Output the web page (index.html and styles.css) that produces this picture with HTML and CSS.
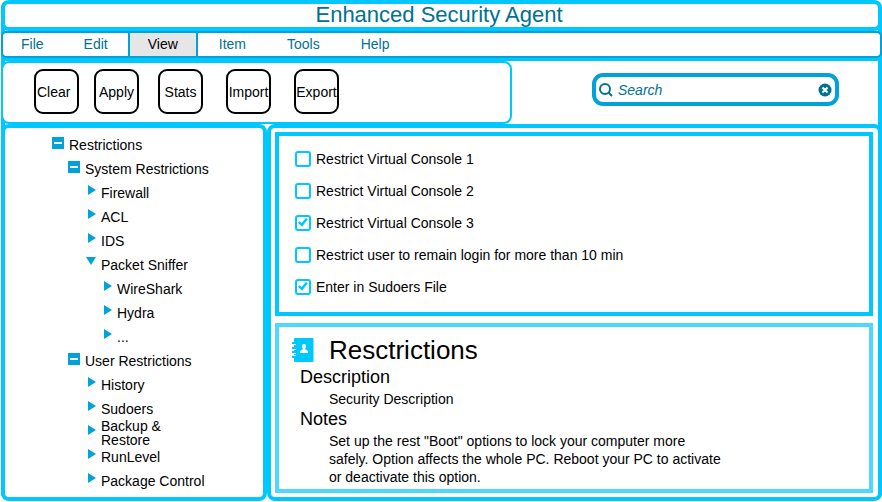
FILE: index.html
```html
<!DOCTYPE html>
<html lang="en">
<head>
<meta charset="utf-8">
<title>Enhanced Security Agent</title>
<link rel="stylesheet" href="styles.css">
</head>
<body>
<div class="window">
  <header class="title-bar"><h1>Enhanced Security Agent</h1></header>
  <nav class="menu">
    <button type="button">File</button>
    <button type="button">Edit</button>
    <button type="button" class="active">View</button>
    <button type="button">Item</button>
    <button type="button">Tools</button>
    <button type="button">Help</button>
  </nav>
  <div class="top">
    <div class="toolbar">
      <button type="button">Clear</button>
      <button type="button">Apply</button>
      <button type="button">Stats</button>
      <button type="button">Import</button>
      <button type="button">Export</button>
    </div>
    <div class="search-area">
      <form class="search" role="search">
        <svg class="icon-search" viewBox="0 0 14 14" aria-hidden="true"><circle cx="6" cy="6" r="5" fill="none" stroke="#00718f" stroke-width="2"/><path d="M9.5 9.5L13 13" stroke="#00718f" stroke-width="2"/></svg>
        <input type="text" placeholder="Search" aria-label="Search">
        <button type="reset" aria-label="Clear search"><svg viewBox="0 0 14 14" aria-hidden="true"><circle cx="7" cy="7" r="6.5" fill="#00718f"/><path d="M4.5 4.5l5 5M9.5 4.5l-5 5" stroke="#fff" stroke-width="2"/></svg></button>
      </form>
    </div>
  </div>
  <main class="content">
    <aside class="sidebar">
      <ul class="tree">
        <li><span class="row"><i class="box"></i>Restrictions</span>
          <ul>
            <li><span class="row"><i class="box"></i>System Restrictions</span>
              <ul>
                <li><span class="row"><i class="arrow"></i>Firewall</span></li>
                <li><span class="row"><i class="arrow"></i>ACL</span></li>
                <li><span class="row"><i class="arrow"></i>IDS</span></li>
                <li><span class="row"><i class="arrow open"></i>Packet Sniffer</span>
                  <ul>
                    <li><span class="row"><i class="arrow"></i>WireShark</span></li>
                    <li><span class="row"><i class="arrow"></i>Hydra</span></li>
                    <li><span class="row"><i class="arrow"></i>...</span></li>
                  </ul>
                </li>
              </ul>
            </li>
            <li><span class="row"><i class="box"></i>User Restrictions</span>
              <ul>
                <li><span class="row"><i class="arrow"></i>History</span></li>
                <li><span class="row"><i class="arrow"></i>Sudoers</span></li>
                <li><span class="row wrapped"><i class="arrow"></i><span>Backup &amp;<br>Restore</span></span></li>
                <li><span class="row"><i class="arrow"></i>RunLevel</span></li>
                <li><span class="row"><i class="arrow"></i>Package Control</span></li>
              </ul>
            </li>
          </ul>
        </li>
      </ul>
    </aside>
    <section class="main-panel">
      <div class="options">
        <label><input type="checkbox">Restrict Virtual Console 1</label>
        <label><input type="checkbox">Restrict Virtual Console 2</label>
        <label><input type="checkbox" checked>Restrict Virtual Console 3</label>
        <label><input type="checkbox">Restrict user to remain login for more than 10 min</label>
        <label><input type="checkbox" checked>Enter in Sudoers File</label>
      </div>
      <article class="info">
        <div class="info-head">
          <svg viewBox="0 0 22 24" aria-hidden="true"><path fill="#00c8ff" d="M3 0h17.500q1 0 1 1v22q0 1-1 1H3q-1 0-1-1V1q0-1 1-1zM0 4h2v2H0zM0 9h2v2H0zM0 13h2v2H0zM0 18h2v2H0z"/><path fill="#fff" d="M1 6h3v1H1zM1 11h3v1H1zM1 15h3v1H1zM1 17h3v1H1zM8 15v-2l3-2q-1-1-1-3 0-2 2-2t2 2q0 2-1 3l3 2v2z"/></svg>
          <h2>Resctrictions</h2>
        </div>
        <h3>Description</h3>
        <p>Security Description</p>
        <h3>Notes</h3>
        <p>Set up the rest "Boot" options to lock your computer more<br>safely. Option affects the whole PC. Reboot your PC to activate<br>or deactivate this option.</p>
      </article>
    </section>
  </main>
</div>
</body>
</html>
```
FILE: styles.css
```css
* { box-sizing: border-box; }
body {
  margin: 0;
  padding: 0 0 1px 1px;
  height: 100vh;
  background: #fff;
  color: #000;
  font: 14px/18px "Liberation Sans", Arial, sans-serif;
}
button, input { font: inherit; }
h1, h2, h3, p, ul { margin: 0; font-weight: normal; }
.window {
  display: flex;
  flex-direction: column;
  min-height: 100%;
  border-radius: 8px;
  background:
    linear-gradient(#00c8ff, #00c8ff) left / 4px 100% no-repeat,
    linear-gradient(#00c8ff, #00c8ff) right / 4px 100% no-repeat;
}
.title-bar {
  height: 31px;
  padding-right: 5px;
  border: 4px solid #00c8ff;
  border-radius: 8px;
  background: #fff;
  background-clip: padding-box;
  text-align: center;
}
h1 { color: #00718f; font-size: 22px; line-height: 22px; }
.menu {
  display: flex;
  height: 27px;
  border: 2px solid #00a3d9;
  border-radius: 5px;
  background: #fff;
  background-clip: padding-box;
  box-shadow: 0 3px 0 #00c8ff;
}
.menu button {
  border: 0;
  padding: 0 20px 2px;
  background: none;
  color: #00718f;
}
.menu button:first-child { padding-left: 18px; }
.menu button.active {
  padding: 0 18px 2px;
  border: solid #00a3d9;
  border-width: 0 2px;
  background: #e6e6e6;
  color: #000;
}
.menu button.active ~ button { padding-left: 21px; }
.top { display: flex; height: 66px; padding-top: 3px; }
.toolbar {
  display: flex;
  gap: 15px;
  width: 58%;
  padding: 6px 31px;
  border: 2px solid #00c8ff;
  border-radius: 8px;
  background: #fff;
  background-clip: padding-box;
}
.toolbar button {
  width: 45px;
  height: 45px;
  padding: 0;
  border: 2px solid #000;
  border-radius: 9px;
  background: #fff;
  color: #000;
}
.toolbar button:first-child { padding-left: 1px; text-align: left; }
.toolbar button:nth-child(3) { margin-left: 4px; }
.toolbar button:nth-child(n+4) { margin-left: 8px; }
.search-area { flex: 1; padding: 12px 43px 0 80px; }
.search {
  display: flex;
  align-items: center;
  height: 33px;
  padding: 0 3px;
  border: 4px solid #00a3d9;
  border-radius: 11px;
}
.search svg { display: block; width: 14px; height: 14px; }
.search input {
  flex: 1;
  min-width: 0;
  padding: 0 5px;
  border: 0;
  outline: 0;
  font-style: italic;
}
.search input::placeholder { color: #00718f; opacity: 1; }
.search button { padding: 0; border: 0; background: none; }
.content { display: flex; flex: 1; }
.sidebar, .main-panel {
  border: 4px solid #00c8ff;
  border-radius: 8px;
  background: #fff;
  background-clip: padding-box;
}
.sidebar { width: 266px; padding: 5px 0 0 31px; }
.tree ul, .tree { padding-left: 16px; list-style: none; }
.row { display: flex; gap: 5px; height: 24px; line-height: 24px; }
.box {
  width: 12px;
  height: 12px;
  margin-top: 4px;
  border: solid #00a3d9;
  border-width: 5px 2px;
  background: #fff;
}
.arrow {
  width: 8px;
  height: 10px;
  margin: 4px 0 0 4px;
  background: #00a3d9;
  clip-path: polygon(0 0, 100% 50%, 0 100%);
}
.arrow.open {
  width: 10px;
  height: 8px;
  margin-left: 2px;
  clip-path: polygon(0 0, 100% 0, 50% 100%);
}
.wrapped { align-items: center; line-height: 14px; }
.wrapped .arrow { align-self: flex-start; }
.main-panel {
  display: flex;
  flex: 1;
  flex-direction: column;
  gap: 7px;
  padding: 4px 5px 4px 4px;
}
.options {
  display: flex;
  flex-direction: column;
  gap: 14px;
  padding: 14px 16px 16px;
  border: 4px solid #00c8ff;
}
.options label { display: flex; align-items: center; gap: 5px; }
.options input {
  appearance: none;
  width: 16px;
  height: 16px;
  margin: 0;
  border: 2px solid #00c8ff;
  border-radius: 3px;
}
.options input:checked::before {
  content: "";
  display: block;
  width: 10px;
  height: 9px;
  margin: 1px;
  background: #00c8ff;
  clip-path: polygon(0 52%, 18% 35%, 36% 56%, 78% 0, 98% 14%, 40% 98%);
}
.info { flex: 1; padding: 7px 12px 0 13px; border: 4px solid #4dd9ff; }
.info-head { display: flex; align-items: center; gap: 15px; height: 32px; }
.info-head svg { width: 22px; height: 24px; }
h2 { font-size: 26px; line-height: 32px; }
h3 { padding-left: 8px; font-size: 18px; line-height: 22px; }
.info p { padding: 2px 0 0 37px; }
```
